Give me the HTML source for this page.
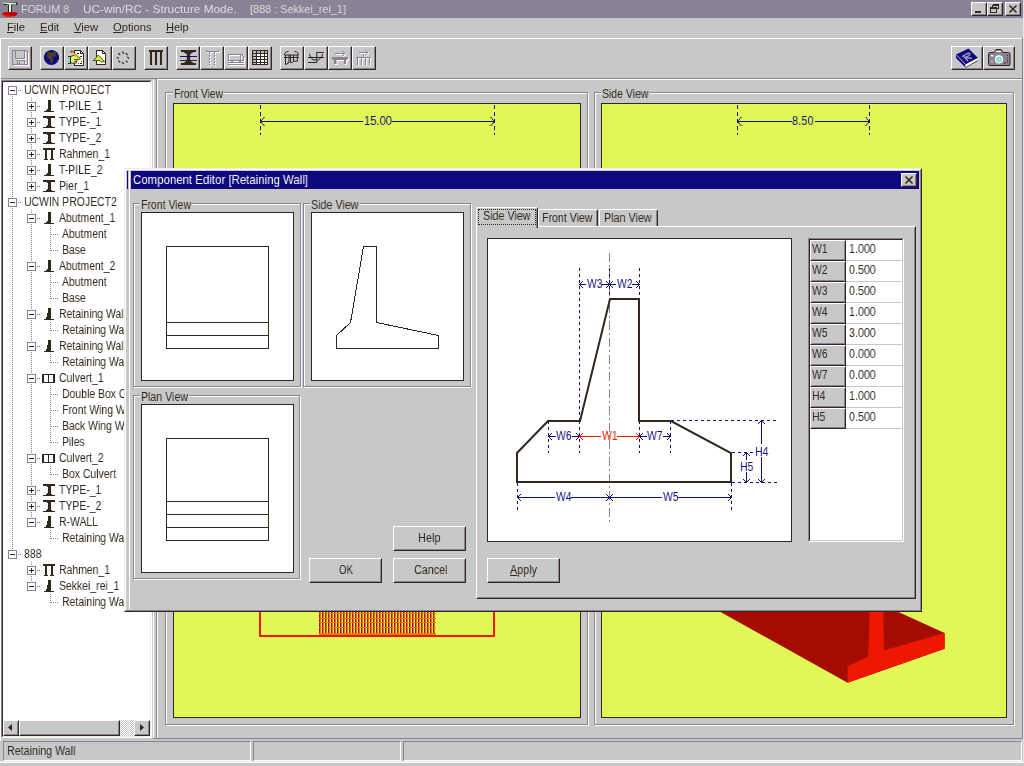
<!DOCTYPE html>
<html><head><meta charset="utf-8"><title>UC-win/RC</title>
<style>
html,body{margin:0;padding:0;}
body{width:1024px;height:766px;overflow:hidden;background:#c8c8c8;position:relative;font-family:"Liberation Sans",sans-serif;font-size:12px;color:#30281f;}
div,span{position:absolute;box-sizing:border-box;white-space:nowrap;}
svg{position:absolute;overflow:visible;}
span{will-change:transform;}
u{text-decoration:underline;text-underline-offset:1px;}
.t{line-height:16px;height:16px;}
.raised{background:#c8c8c8;border:1px solid;border-color:#ffffff #30281f #30281f #ffffff;}
.raised:after{content:"";position:absolute;left:0;top:0;right:0;bottom:0;border:1px solid;border-color:#c8c8c8 #8c8296 #8c8296 #c8c8c8;}
.tb{background:#c8c8c8;border:1px solid;border-color:#ffffff #30281f #30281f #ffffff;width:24px;height:24px;top:46px;}
.tb:after{content:"";position:absolute;left:0;top:0;right:0;bottom:0;border:1px solid;border-color:#c8c8c8 #8c8296 #8c8296 #c8c8c8;}
.grp{border:1px solid #8c8296;box-shadow:1px 1px 0 #ffffff, inset 1px 1px 0 #ffffff;}
.lbl{background:#c8c8c8;padding:0 1px;line-height:14px;height:14px;}
.sunk{border:1px solid;border-color:#8c8296 #ffffff #ffffff #8c8296;}
.btn{background:#c8c8c8;border:1px solid;border-color:#ffffff #30281f #30281f #ffffff;text-align:center;}
.btn:after{content:"";position:absolute;left:0;top:0;right:0;bottom:0;border:1px solid;border-color:#c8c8c8 #8c8296 #8c8296 #c8c8c8;}
.btn span{left:0;right:0;top:4px;line-height:14px;}
.box{background:#ffffff;border:1px solid #30281f;}
.ms{transform:scaleX(0.88);transform-origin:0 0;}
.btn span.ms{transform-origin:50% 0;}
.hl{height:1px;} .vl{width:1px;}
</style></head>
<body>
<div id="title" style="left:0;top:0;width:1023px;height:18px;background:#8c8296;"></div>
<span style="left:21px;top:1px;font-size:11px;line-height:16px;height:16px;transform:scaleX(0.970);transform-origin:0 0;color:#dcdcdc;">FORUM 8</span>
<span style="left:82.5px;top:1px;font-size:11px;line-height:16px;height:16px;transform:scaleX(1.073);transform-origin:0 0;color:#dcdcdc;">UC-win/RC - Structure Mode.</span>
<span style="left:250px;top:1px;font-size:11px;line-height:16px;height:16px;transform:scaleX(0.987);transform-origin:0 0;color:#dcdcdc;">[888 : Sekkei_rei_1]</span>
<svg style="left:0;top:0" width="20" height="18" viewBox="0 0 20 18"><path d="M3.5 2.5H17.5V5H12V12H8V5H3.5Z" fill="#30281f"/><path d="M3 2L5.5 2.5L16 3V4.5L11 4.5V12H9V4.5L5.5 4L3 3.2Z" fill="#c4f0c4"/><path d="M9.6 5V12H10.6V5Z" fill="#ffffff"/><path d="M2 13.5L5 12H15L18 13.5L15.5 16L8 17L4 16Z" fill="#b80000"/><path d="M2 13.8L9 15L11 16.6L8 17L4 16Z" fill="#f01808"/></svg>
<div class="raised" style="left:971px;top:2px;width:16px;height:14px;"></div>
<div class="raised" style="left:987px;top:2px;width:16px;height:14px;"></div>
<div class="raised" style="left:1005px;top:2px;width:16px;height:14px;"></div>
<div style="left:975px;top:11px;width:6px;height:2px;background:#30281f;"></div>
<svg style="left:987px;top:2px" width="16" height="14" viewBox="0 0 16 14" shape-rendering="crispEdges"><path d="M5.5 3.5h6M5.5 2.5h6v4h-2M5.5 2.5v2M3.5 6.5h6M3.5 5.5h6v5h-6z" fill="none" stroke="#30281f" stroke-width="1"/></svg>
<svg style="left:1005px;top:2px" width="16" height="14" viewBox="0 0 16 14"><path d="M4.5 3.5l7 7M11.5 3.5l-7 7" fill="none" stroke="#30281f" stroke-width="1.6"/></svg>
<span style="left:7.4px;top:19px;font-size:11px;line-height:16px;height:16px;transform:scaleX(1.016);transform-origin:0 0;"><u>F</u>ile</span>
<span style="left:40.2px;top:19px;font-size:11px;line-height:16px;height:16px;transform:scaleX(1.013);transform-origin:0 0;"><u>E</u>dit</span>
<span style="left:74.2px;top:19px;font-size:11px;line-height:16px;height:16px;transform:scaleX(1.024);transform-origin:0 0;"><u>V</u>iew</span>
<span style="left:112.5px;top:19px;font-size:11px;line-height:16px;height:16px;transform:scaleX(1.021);transform-origin:0 0;"><u>O</u>ptions</span>
<span style="left:166px;top:19px;font-size:11px;line-height:16px;height:16px;transform:scaleX(1.003);transform-origin:0 0;"><u>H</u>elp</span>
<div class="hl" style="left:0;top:38px;width:1023px;background:#ffffff;"></div>
<div class="vl" style="left:0;top:38px;height:40px;background:#ffffff;"></div>
<div class="vl" style="left:1022px;top:38px;height:41px;background:#8c8296;"></div>
<div class="hl" style="left:0;top:78px;width:1023px;background:#8c8296;"></div>
<div class="tb" id="tb0" style="left:8px;"></div>
<div class="tb" id="tb1" style="left:40px;"></div>
<div class="tb" id="tb2" style="left:64px;"></div>
<div class="tb" id="tb3" style="left:88px;"></div>
<div class="tb" id="tb4" style="left:112px;"></div>
<div class="tb" id="tb5" style="left:144px;"></div>
<div class="tb" id="tb6" style="left:176px;"></div>
<div class="tb" id="tb7" style="left:200px;"></div>
<div class="tb" id="tb8" style="left:224px;"></div>
<div class="tb" id="tb9" style="left:248px;"></div>
<div class="tb" id="tb10" style="left:280px;"></div>
<div class="tb" id="tb11" style="left:304px;"></div>
<div class="tb" id="tb12" style="left:328px;"></div>
<div class="tb" id="tb13" style="left:352px;"></div>
<div class="tb" id="tbA" style="left:951px;width:32px;"></div>
<div class="tb" id="tbB" style="left:983px;width:32px;"></div>
<svg style="left:0;top:0" width="1024" height="80" shape-rendering="crispEdges" fill="none"><g transform="translate(8,46)"><path transform="translate(1,1)" d="M19.5 5.5V18.5H4.5M7.5 12.5H16.5V4.5M16.5 14.5V18.5M12.5 17.5H11.5" stroke="#ffffff"/><path d="M4.5 4.5H18.5L19.5 5.5V18.5H4.5ZM7.5 4.5V12.5H16.5V4.5M9.5 18.5V14.5H16.5V18.5M11.5 15.5V17.5" stroke="#8c8296"/></g><g transform="translate(40,46)"><g shape-rendering="auto"><circle cx="11.5" cy="11.5" r="7.6" fill="#10087f"/><path d="M7.5 6.5L10 5.5L10.5 7L13 6.5L14 5.5L16.5 6.5L15.5 8L16 10L14 11L13 10.5L12.5 12.5L13.5 14L12 17L10.5 17L10.5 13.5L8 12.5L6 10L7 8.5ZM16.5 14.5L18 14L17.5 16.5L16.5 16Z" fill="#4a3e28"/></g></g><g transform="translate(64,46)"><path d="M10.5 4.5H16.5L19.5 7.5V19.5H10.5Z" fill="#ffffff" stroke="#30281f"/><path d="M16.5 4.5V7.5H19.5" stroke="#30281f"/><path d="M13 7.5h2M16 10.5h2M14 17.5h1M16 17.5h2M17 15.5h1" stroke="#30281f"/><g shape-rendering="auto"><path d="M6.5 11L8 9.8L11 9.5L12.5 11L16 12.2L16.2 13.4L12.8 13.6L13 15L12.5 17L9 17.3L6.5 16.5Z" fill="#eef27a" stroke="#30281f" stroke-width="0.9"/><path d="M10 13.6H13M10 15.4H12.6" stroke="#30281f" stroke-width="0.8"/><path d="M8.2 6.2L15.6 13.4" stroke="#d8e000" stroke-width="1.7"/><path d="M8.6 5.2L16.2 12.6" stroke="#30281f" stroke-width="0.7"/><circle cx="7.6" cy="5.6" r="1.1" fill="#f01000"/></g><rect x="4" y="11" width="2" height="6" fill="#80dcc8"/><path d="M4 10.5H7M4 17.5H7M6.5 11V17" stroke="#30281f"/></g><g transform="translate(88,46)"><path d="M8.5 4.5H14.5L17.5 7.5V18.5H8.5Z" fill="#ffffff" stroke="#30281f"/><path d="M14.5 4.5V7.5H17.5" stroke="#30281f"/><g shape-rendering="auto"><path d="M10.4 9L5.3 14.6H12L13 15.8H16.6Z" fill="#d8f018" stroke="#30281f" stroke-width="0.8"/></g></g><g transform="translate(112,46)"><path d="M15.3 10.9L17.1 12.7M13.8 14.6L15.6 16.4M10.1 16.1L11.9 17.9M6.4 14.6L8.2 16.4M4.9 10.9L6.7 12.7M6.4 7.2L8.2 9.0M10.1 5.7L11.9 7.5M13.8 7.2L15.6 9.0" stroke="#30281f" stroke-width="1.2" shape-rendering="auto"/></g><g transform="translate(144,46)"><path d="M5 4H19V6H5ZM6 6H8V19H6ZM11 6H13V19H11ZM16 6H18V19H16Z" fill="#30281f"/></g><g transform="translate(176,46)"><path d="M5 4H20V6H17.5L14.2 8.2V14.8L17.5 17H20V19H5V17H7.5L10.8 14.8V8.2L7.5 6H5Z" fill="#30281f" shape-rendering="auto"/><path d="M4 10.5H21" stroke="#10087f"/><path d="M4 14.5H21" stroke="#30281f"/></g><g transform="translate(200,46)"><path transform="translate(1,1)" d="M6.5 4V5.5H18.5V4" stroke="#ffffff"/><path transform="translate(1,1)" d="M9.5 6V19M14.5 6V19" stroke="#ffffff" stroke-dasharray="2 1"/><path transform="translate(0,0)" d="M6.5 4V5.5H18.5V4" stroke="#8c8296"/><path transform="translate(0,0)" d="M9.5 6V19M14.5 6V19" stroke="#8c8296" stroke-dasharray="2 1"/></g><g transform="translate(224,46)"><path transform="translate(1,1)" d="M4.5 8.5H16.5V14.5H4.5ZM16.5 8.5H18.5L19.5 11.5V14.5H16.5M4 16.5H20M7 15.5H9M15 15.5H17M4 18.5H20" stroke="#ffffff"/><path transform="translate(0,0)" d="M4.5 8.5H16.5V14.5H4.5ZM16.5 8.5H18.5L19.5 11.5V14.5H16.5M4 16.5H20M7 15.5H9M15 15.5H17M4 18.5H20" stroke="#8c8296"/></g><g transform="translate(248,46)"><rect x="4" y="4" width="16" height="15" fill="#30281f"/><rect x="5" y="5" width="3" height="2" fill="#b8b8b8"/><rect x="9" y="5" width="3" height="2" fill="#b8b8b8"/><rect x="13" y="5" width="3" height="2" fill="#b8b8b8"/><rect x="17" y="5" width="2" height="2" fill="#b8b8b8"/><rect x="5" y="8" width="3" height="2" fill="#b8b8b8"/><rect x="9" y="8" width="3" height="2" fill="#ffffff"/><rect x="13" y="8" width="3" height="2" fill="#ffffff"/><rect x="17" y="8" width="2" height="2" fill="#ffffff"/><rect x="5" y="11" width="3" height="2" fill="#b8b8b8"/><rect x="9" y="11" width="3" height="2" fill="#ffffff"/><rect x="13" y="11" width="3" height="2" fill="#ffffff"/><rect x="17" y="11" width="2" height="2" fill="#ffffff"/><rect x="5" y="14" width="3" height="2" fill="#b8b8b8"/><rect x="9" y="14" width="3" height="2" fill="#ffffff"/><rect x="13" y="14" width="3" height="2" fill="#ffffff"/><rect x="17" y="14" width="2" height="2" fill="#ffffff"/><rect x="5" y="17" width="3" height="1" fill="#b8b8b8"/><rect x="9" y="17" width="3" height="1" fill="#ffffff"/><rect x="13" y="17" width="3" height="1" fill="#ffffff"/><rect x="17" y="17" width="2" height="1" fill="#ffffff"/></g><g transform="translate(280,46)"><path d="M4.5 9C4.5 6.8 5.8 5.5 8.6 5.5M14.4 5.5C17.2 5.5 18.5 6.8 18.5 9M4.5 9H18.5M4 11.5H19M5.5 9V18.5L7.5 17.8V17H9V9M10.5 9V16.5H12.5L13.5 15.2M13.5 9V15.2H17.4V9" stroke="#30281f" shape-rendering="auto"/></g><g transform="translate(304,46)"><path d="M12.5 6.5H20M12.8 6.5V16.5H4M4 11.5H20M5.5 8L6.2 10L9 14H14.5L17.6 11L18.7 8" stroke="#30281f" shape-rendering="auto"/></g><g transform="translate(328,46)"><g transform="translate(1,1)"><path d="M4 11H20V13L18 14.5V18H16V14H8.5V18H6V14.5L4 13Z" fill="#ffffff" shape-rendering="auto"/><path d="M7 7.5H17M14 5L16.8 7.5L14 10" stroke="#ffffff" shape-rendering="auto"/></g><g transform="translate(0,0)"><path d="M4 11H20V13L18 14.5V18H16V14H8.5V18H6V14.5L4 13Z" fill="#8c8296" shape-rendering="auto"/><path d="M7 7.5H17M14 5L16.8 7.5L14 10" stroke="#8c8296" shape-rendering="auto"/></g></g><g transform="translate(352,46)"><g transform="translate(1,1)"><path d="M4 11.5H19M5.5 12V19M9.5 12V19M13.5 12V19M17.5 12V19M11.5 8V11" stroke="#ffffff"/><path d="M7 6.5H16M13.3 4L15.9 6.5L13.3 9" stroke="#ffffff" shape-rendering="auto"/></g><g transform="translate(0,0)"><path d="M4 11.5H19M5.5 12V19M9.5 12V19M13.5 12V19M17.5 12V19M11.5 8V11" stroke="#8c8296"/><path d="M7 6.5H16M13.3 4L15.9 6.5L13.3 9" stroke="#8c8296" shape-rendering="auto"/></g></g><g transform="translate(951,46)"><g shape-rendering="auto"><path d="M5 8.5L17.5 2.5L27 12L14.5 18.5Z" fill="#10087f"/><path d="M5 8.5V12L14.5 21.5V18.5Z" fill="#10087f"/><path d="M5.8 9.2L14.5 18.5" stroke="#d0d0e8" stroke-width="0.8"/><path d="M14.5 18.5L27 12V14.5L14.5 21.5Z" fill="#ffffff"/><path d="M14.5 21.5L27 14.5" stroke="#30281f" stroke-width="0.8"/><path d="M11 10.5L16.5 7.5C19 6.5 20 8.5 17.5 10L14.5 11.5M12 9.5L17 15M15 11.5L21 12.5" stroke="#a09cb4" stroke-width="1.4"/></g></g><g transform="translate(983,46)"><g shape-rendering="auto"><path d="M5.5 8C5.5 7 6 6.5 7 6.5H11L13 3.5H18L20 6.5H25.5C26.5 6.5 27 7 27 8V18.5C27 19.3 26.5 19.5 26 19.5H6.5C6 19.5 5.5 19.3 5.5 18.5Z" fill="#8c8296" stroke="#30281f"/><path d="M13 5.5H18" stroke="#ffffff"/><rect x="8" y="9" width="2.5" height="1.5" fill="#ffffff"/><circle cx="16" cy="13.4" r="4.1" fill="#ffffff"/><circle cx="16" cy="13.4" r="2.9" fill="#80dcc8"/><circle cx="16.5" cy="13.5" r="0.8" fill="#ffffff"/><path d="M24.5 9V18" stroke="#30281f" stroke-dasharray="1 1.2"/><path d="M21 18l2-2" stroke="#30281f"/><path d="M8 14l1 3l1-3" stroke="#b8b0c0" stroke-width="0.7"/></g></g></svg>
<div id="tree" style="left:1px;top:80px;width:151px;height:658px;border:1px solid;border-color:#8c8296 #ffffff #ffffff #8c8296;"></div>
<div id="treein" style="left:2px;top:81px;width:149px;height:656px;border:1px solid;border-color:#30281f #ecece6 #ecece6 #30281f;background:#ffffff;overflow:hidden;"><svg style="left:-3px;top:-82px" width="160" height="760" shape-rendering="crispEdges"><path d="M12.5 96V550" stroke="#8c8296" stroke-width="1" stroke-dasharray="1 1"/><path d="M31.5 98V182" stroke="#8c8296" stroke-width="1" stroke-dasharray="1 1"/><path d="M31.5 210V518" stroke="#8c8296" stroke-width="1" stroke-dasharray="1 1"/><path d="M31.5 562V582" stroke="#8c8296" stroke-width="1" stroke-dasharray="1 1"/><path d="M50.5 226V251" stroke="#8c8296" stroke-width="1" stroke-dasharray="1 1"/><path d="M50.5 274V299" stroke="#8c8296" stroke-width="1" stroke-dasharray="1 1"/><path d="M50.5 322V331" stroke="#8c8296" stroke-width="1" stroke-dasharray="1 1"/><path d="M50.5 354V363" stroke="#8c8296" stroke-width="1" stroke-dasharray="1 1"/><path d="M50.5 386V443" stroke="#8c8296" stroke-width="1" stroke-dasharray="1 1"/><path d="M50.5 466V475" stroke="#8c8296" stroke-width="1" stroke-dasharray="1 1"/><path d="M50.5 530V539" stroke="#8c8296" stroke-width="1" stroke-dasharray="1 1"/><path d="M50.5 594V603" stroke="#8c8296" stroke-width="1" stroke-dasharray="1 1"/><path d="M18 90.5H22" stroke="#8c8296" stroke-width="1" stroke-dasharray="1 1"/><rect x="8.5" y="86.5" width="8" height="8" fill="#fff" stroke="#8c8296"/><path d="M10 90.5h5" stroke="#30281f"/><path d="M37 106.5H41" stroke="#8c8296" stroke-width="1" stroke-dasharray="1 1"/><rect x="27.5" y="102.5" width="8" height="8" fill="#fff" stroke="#8c8296"/><path d="M29 106.5h5" stroke="#30281f"/><path d="M31.5 104v5" stroke="#30281f"/><path d="M44 112h10v-1.5h-2.5l-1-1.5v-9h-3v9l-1 1.5h-2.5z" fill="#30281f"/><path d="M37 122.5H41" stroke="#8c8296" stroke-width="1" stroke-dasharray="1 1"/><rect x="27.5" y="118.5" width="8" height="8" fill="#fff" stroke="#8c8296"/><path d="M29 122.5h5" stroke="#30281f"/><path d="M31.5 120v5" stroke="#30281f"/><path d="M43 116h12v1.5h-3l-1.5 2v5l1.5 2h3v1.5h-12v-1.5h3l1.5-2v-5l-1.5-2h-3z" fill="#30281f"/><path d="M37 138.5H41" stroke="#8c8296" stroke-width="1" stroke-dasharray="1 1"/><rect x="27.5" y="134.5" width="8" height="8" fill="#fff" stroke="#8c8296"/><path d="M29 138.5h5" stroke="#30281f"/><path d="M31.5 136v5" stroke="#30281f"/><path d="M43 132h12v1.5h-3l-1.5 2v5l1.5 2h3v1.5h-12v-1.5h3l1.5-2v-5l-1.5-2h-3z" fill="#30281f"/><path d="M37 154.5H41" stroke="#8c8296" stroke-width="1" stroke-dasharray="1 1"/><rect x="27.5" y="150.5" width="8" height="8" fill="#fff" stroke="#8c8296"/><path d="M29 154.5h5" stroke="#30281f"/><path d="M31.5 152v5" stroke="#30281f"/><path d="M43 148h12v2h-2v9h1v1h-4v-1h1v-9h-4v9h1v1h-4v-1h1v-9h-2z" fill="#30281f"/><path d="M37 170.5H41" stroke="#8c8296" stroke-width="1" stroke-dasharray="1 1"/><rect x="27.5" y="166.5" width="8" height="8" fill="#fff" stroke="#8c8296"/><path d="M29 170.5h5" stroke="#30281f"/><path d="M31.5 168v5" stroke="#30281f"/><path d="M44 176h10v-1.5h-2.5l-1-1.5v-9h-3v9l-1 1.5h-2.5z" fill="#30281f"/><path d="M37 186.5H41" stroke="#8c8296" stroke-width="1" stroke-dasharray="1 1"/><rect x="27.5" y="182.5" width="8" height="8" fill="#fff" stroke="#8c8296"/><path d="M29 186.5h5" stroke="#30281f"/><path d="M31.5 184v5" stroke="#30281f"/><path d="M43 180h12v1.5h-3l-1.5 2v5l1.5 2h3v1.5h-12v-1.5h3l1.5-2v-5l-1.5-2h-3z" fill="#30281f"/><path d="M18 202.5H22" stroke="#8c8296" stroke-width="1" stroke-dasharray="1 1"/><rect x="8.5" y="198.5" width="8" height="8" fill="#fff" stroke="#8c8296"/><path d="M10 202.5h5" stroke="#30281f"/><path d="M37 218.5H41" stroke="#8c8296" stroke-width="1" stroke-dasharray="1 1"/><rect x="27.5" y="214.5" width="8" height="8" fill="#fff" stroke="#8c8296"/><path d="M29 218.5h5" stroke="#30281f"/><path d="M44 224h10v-1.5h-2.5l-1-1.5v-9h-3v9l-1 1.5h-2.5z" fill="#30281f"/><path d="M51 234.5H59" stroke="#8c8296" stroke-width="1" stroke-dasharray="1 1"/><path d="M51 250.5H59" stroke="#8c8296" stroke-width="1" stroke-dasharray="1 1"/><path d="M37 266.5H41" stroke="#8c8296" stroke-width="1" stroke-dasharray="1 1"/><rect x="27.5" y="262.5" width="8" height="8" fill="#fff" stroke="#8c8296"/><path d="M29 266.5h5" stroke="#30281f"/><path d="M44 272h10v-1.5h-2.5l-1-1.5v-9h-3v9l-1 1.5h-2.5z" fill="#30281f"/><path d="M51 282.5H59" stroke="#8c8296" stroke-width="1" stroke-dasharray="1 1"/><path d="M51 298.5H59" stroke="#8c8296" stroke-width="1" stroke-dasharray="1 1"/><path d="M37 314.5H41" stroke="#8c8296" stroke-width="1" stroke-dasharray="1 1"/><rect x="27.5" y="310.5" width="8" height="8" fill="#fff" stroke="#8c8296"/><path d="M29 314.5h5" stroke="#30281f"/><path d="M44 320h10v-1.5h-3.5v-10.5h-2l-1.5 8l-1 2.5h-2z" fill="#30281f"/><path d="M51 330.5H59" stroke="#8c8296" stroke-width="1" stroke-dasharray="1 1"/><path d="M37 346.5H41" stroke="#8c8296" stroke-width="1" stroke-dasharray="1 1"/><rect x="27.5" y="342.5" width="8" height="8" fill="#fff" stroke="#8c8296"/><path d="M29 346.5h5" stroke="#30281f"/><path d="M44 352h10v-1.5h-3.5v-10.5h-2l-1.5 8l-1 2.5h-2z" fill="#30281f"/><path d="M51 362.5H59" stroke="#8c8296" stroke-width="1" stroke-dasharray="1 1"/><path d="M37 378.5H41" stroke="#8c8296" stroke-width="1" stroke-dasharray="1 1"/><rect x="27.5" y="374.5" width="8" height="8" fill="#fff" stroke="#8c8296"/><path d="M29 378.5h5" stroke="#30281f"/><rect x="43" y="374.5" width="11" height="8" fill="#fff" stroke="#30281f" stroke-width="1.6"/><path d="M48.5 374.5v8" stroke="#30281f" stroke-width="1.6"/><path d="M51 394.5H59" stroke="#8c8296" stroke-width="1" stroke-dasharray="1 1"/><path d="M51 410.5H59" stroke="#8c8296" stroke-width="1" stroke-dasharray="1 1"/><path d="M51 426.5H59" stroke="#8c8296" stroke-width="1" stroke-dasharray="1 1"/><path d="M51 442.5H59" stroke="#8c8296" stroke-width="1" stroke-dasharray="1 1"/><path d="M37 458.5H41" stroke="#8c8296" stroke-width="1" stroke-dasharray="1 1"/><rect x="27.5" y="454.5" width="8" height="8" fill="#fff" stroke="#8c8296"/><path d="M29 458.5h5" stroke="#30281f"/><rect x="43" y="454.5" width="11" height="8" fill="#fff" stroke="#30281f" stroke-width="1.6"/><path d="M48.5 454.5v8" stroke="#30281f" stroke-width="1.6"/><path d="M51 474.5H59" stroke="#8c8296" stroke-width="1" stroke-dasharray="1 1"/><path d="M37 490.5H41" stroke="#8c8296" stroke-width="1" stroke-dasharray="1 1"/><rect x="27.5" y="486.5" width="8" height="8" fill="#fff" stroke="#8c8296"/><path d="M29 490.5h5" stroke="#30281f"/><path d="M31.5 488v5" stroke="#30281f"/><path d="M43 484h12v1.5h-3l-1.5 2v5l1.5 2h3v1.5h-12v-1.5h3l1.5-2v-5l-1.5-2h-3z" fill="#30281f"/><path d="M37 506.5H41" stroke="#8c8296" stroke-width="1" stroke-dasharray="1 1"/><rect x="27.5" y="502.5" width="8" height="8" fill="#fff" stroke="#8c8296"/><path d="M29 506.5h5" stroke="#30281f"/><path d="M31.5 504v5" stroke="#30281f"/><path d="M43 500h12v1.5h-3l-1.5 2v5l1.5 2h3v1.5h-12v-1.5h3l1.5-2v-5l-1.5-2h-3z" fill="#30281f"/><path d="M37 522.5H41" stroke="#8c8296" stroke-width="1" stroke-dasharray="1 1"/><rect x="27.5" y="518.5" width="8" height="8" fill="#fff" stroke="#8c8296"/><path d="M29 522.5h5" stroke="#30281f"/><path d="M44 528h10v-1.5h-3.5v-10.5h-2l-1.5 8l-1 2.5h-2z" fill="#30281f"/><path d="M51 538.5H59" stroke="#8c8296" stroke-width="1" stroke-dasharray="1 1"/><path d="M18 554.5H22" stroke="#8c8296" stroke-width="1" stroke-dasharray="1 1"/><rect x="8.5" y="550.5" width="8" height="8" fill="#fff" stroke="#8c8296"/><path d="M10 554.5h5" stroke="#30281f"/><path d="M37 570.5H41" stroke="#8c8296" stroke-width="1" stroke-dasharray="1 1"/><rect x="27.5" y="566.5" width="8" height="8" fill="#fff" stroke="#8c8296"/><path d="M29 570.5h5" stroke="#30281f"/><path d="M31.5 568v5" stroke="#30281f"/><path d="M43 564h12v2h-2v9h1v1h-4v-1h1v-9h-4v9h1v1h-4v-1h1v-9h-2z" fill="#30281f"/><path d="M37 586.5H41" stroke="#8c8296" stroke-width="1" stroke-dasharray="1 1"/><rect x="27.5" y="582.5" width="8" height="8" fill="#fff" stroke="#8c8296"/><path d="M29 586.5h5" stroke="#30281f"/><path d="M44 592h10v-1.5h-3.5v-10.5h-2l-1.5 8l-1 2.5h-2z" fill="#30281f"/><path d="M51 602.5H59" stroke="#8c8296" stroke-width="1" stroke-dasharray="1 1"/></svg><span style="left:21px;top:0px;font-size:12.5px;line-height:16px;height:16px;transform:scaleX(0.835);transform-origin:0 0;">UCWIN PROJECT</span><span style="left:56px;top:16px;font-size:12.5px;line-height:16px;height:16px;transform:scaleX(0.835);transform-origin:0 0;">T-PILE_1</span><span style="left:56px;top:32px;font-size:12.5px;line-height:16px;height:16px;transform:scaleX(0.835);transform-origin:0 0;">TYPE-_1</span><span style="left:56px;top:48px;font-size:12.5px;line-height:16px;height:16px;transform:scaleX(0.835);transform-origin:0 0;">TYPE-_2</span><span style="left:56px;top:64px;font-size:12.5px;line-height:16px;height:16px;transform:scaleX(0.835);transform-origin:0 0;">Rahmen_1</span><span style="left:56px;top:80px;font-size:12.5px;line-height:16px;height:16px;transform:scaleX(0.835);transform-origin:0 0;">T-PILE_2</span><span style="left:56px;top:96px;font-size:12.5px;line-height:16px;height:16px;transform:scaleX(0.835);transform-origin:0 0;">Pier_1</span><span style="left:21px;top:112px;font-size:12.5px;line-height:16px;height:16px;transform:scaleX(0.835);transform-origin:0 0;">UCWIN PROJECT2</span><span style="left:56px;top:128px;font-size:12.5px;line-height:16px;height:16px;transform:scaleX(0.835);transform-origin:0 0;">Abutment_1</span><span style="left:59px;top:144px;font-size:12.5px;line-height:16px;height:16px;transform:scaleX(0.835);transform-origin:0 0;">Abutment</span><span style="left:59px;top:160px;font-size:12.5px;line-height:16px;height:16px;transform:scaleX(0.835);transform-origin:0 0;">Base</span><span style="left:56px;top:176px;font-size:12.5px;line-height:16px;height:16px;transform:scaleX(0.835);transform-origin:0 0;">Abutment_2</span><span style="left:59px;top:192px;font-size:12.5px;line-height:16px;height:16px;transform:scaleX(0.835);transform-origin:0 0;">Abutment</span><span style="left:59px;top:208px;font-size:12.5px;line-height:16px;height:16px;transform:scaleX(0.835);transform-origin:0 0;">Base</span><span style="left:56px;top:224px;font-size:12.5px;line-height:16px;height:16px;transform:scaleX(0.835);transform-origin:0 0;">Retaining Wall_1</span><span style="left:59px;top:240px;font-size:12.5px;line-height:16px;height:16px;transform:scaleX(0.835);transform-origin:0 0;">Retaining Wall</span><span style="left:56px;top:256px;font-size:12.5px;line-height:16px;height:16px;transform:scaleX(0.835);transform-origin:0 0;">Retaining Wall_2</span><span style="left:59px;top:272px;font-size:12.5px;line-height:16px;height:16px;transform:scaleX(0.835);transform-origin:0 0;">Retaining Wall</span><span style="left:56px;top:288px;font-size:12.5px;line-height:16px;height:16px;transform:scaleX(0.835);transform-origin:0 0;">Culvert_1</span><span style="left:59px;top:304px;font-size:12.5px;line-height:16px;height:16px;transform:scaleX(0.835);transform-origin:0 0;">Double Box Culvert</span><span style="left:59px;top:320px;font-size:12.5px;line-height:16px;height:16px;transform:scaleX(0.835);transform-origin:0 0;">Front Wing Wall</span><span style="left:59px;top:336px;font-size:12.5px;line-height:16px;height:16px;transform:scaleX(0.835);transform-origin:0 0;">Back Wing Wall</span><span style="left:59px;top:352px;font-size:12.5px;line-height:16px;height:16px;transform:scaleX(0.835);transform-origin:0 0;">Piles</span><span style="left:56px;top:368px;font-size:12.5px;line-height:16px;height:16px;transform:scaleX(0.835);transform-origin:0 0;">Culvert_2</span><span style="left:59px;top:384px;font-size:12.5px;line-height:16px;height:16px;transform:scaleX(0.835);transform-origin:0 0;">Box Culvert</span><span style="left:56px;top:400px;font-size:12.5px;line-height:16px;height:16px;transform:scaleX(0.835);transform-origin:0 0;">TYPE-_1</span><span style="left:56px;top:416px;font-size:12.5px;line-height:16px;height:16px;transform:scaleX(0.835);transform-origin:0 0;">TYPE-_2</span><span style="left:56px;top:432px;font-size:12.5px;line-height:16px;height:16px;transform:scaleX(0.835);transform-origin:0 0;">R-WALL</span><span style="left:59px;top:448px;font-size:12.5px;line-height:16px;height:16px;transform:scaleX(0.835);transform-origin:0 0;">Retaining Wall</span><span style="left:21px;top:464px;font-size:12.5px;line-height:16px;height:16px;transform:scaleX(0.835);transform-origin:0 0;">888</span><span style="left:56px;top:480px;font-size:12.5px;line-height:16px;height:16px;transform:scaleX(0.835);transform-origin:0 0;">Rahmen_1</span><span style="left:56px;top:496px;font-size:12.5px;line-height:16px;height:16px;transform:scaleX(0.835);transform-origin:0 0;">Sekkei_rei_1</span><span style="left:59px;top:512px;font-size:12.5px;line-height:16px;height:16px;transform:scaleX(0.835);transform-origin:0 0;">Retaining Wall</span><div class="" style="left:0px;top:638px;width:147px;height:16px;background:repeating-conic-gradient(#ffffff 0% 25%, #c8c8c8 0% 50%) 0 0/2px 2px;"></div><div class="raised" style="left:0px;top:638px;width:16px;height:16px;"></div><div class="raised" style="left:16px;top:638px;width:101px;height:16px;"></div><div class="raised" style="left:131px;top:638px;width:16px;height:16px;"></div><svg style="left:0px;top:638px" width="16" height="16"><path d="M9 4v7l-4-3.5z" fill="#30281f"/></svg><svg style="left:131px;top:638px" width="16" height="16"><path d="M6 4v7l4-3.5z" fill="#30281f"/></svg></div>
<div class="vl" style="left:0;top:38px;height:703px;background:#ffffff;"></div>
<div class="vl" style="left:153px;top:80px;height:659px;background:#ffffff;"></div>
<div class="vl" style="left:156px;top:79px;height:660px;background:#8c8296;"></div>
<div class="vl" style="left:157px;top:79px;height:659px;background:#ffffff;"></div>
<div class="hl" style="left:157px;top:79px;width:865px;background:#ffffff;"></div>
<div class="hl" style="left:153px;top:738px;width:870px;background:#8c8296;"></div>
<div class="vl" style="left:1022px;top:79px;height:660px;background:#8c8296;"></div>
<div class="vl" style="left:1023px;top:0px;height:763px;background:#e4e4e4;"></div>
<div class="grp" style="left:165px;top:92px;width:423px;height:633px;"></div>
<div style="left:172.5px;top:92px;width:51px;height:2px;background:#c8c8c8;"></div>
<span style="left:173.5px;top:85.5px;font-size:12.5px;line-height:16px;height:16px;transform:scaleX(0.823);transform-origin:0 0;">Front View</span>
<div class="grp" style="left:594px;top:92px;width:420px;height:633px;"></div>
<div style="left:601px;top:92px;width:48.5px;height:2px;background:#c8c8c8;"></div>
<span style="left:602px;top:85.5px;font-size:12.5px;line-height:16px;height:16px;transform:scaleX(0.840);transform-origin:0 0;">Side View</span>
<div id="y1" style="left:173px;top:103px;width:408px;height:615px;background:#e1f755;border:1px solid #30281f;overflow:hidden;"></div>
<div id="y2" style="left:601px;top:103px;width:406px;height:615px;background:#e1f755;border:1px solid #30281f;overflow:hidden;"></div>
<svg style="left:0;top:0" width="1024" height="766" shape-rendering="crispEdges"><path d="M260.5 105V135M494.5 105V135" stroke="#10107c" stroke-dasharray="4 3" fill="none"/><path d="M260 121.5H362.5M391.5 121.5H495" stroke="#10107c" fill="none"/><path d="M264.5 117L260.5 121.5L264.5 126M490.5 117L494.5 121.5L490.5 126" stroke="#10107c" fill="none" shape-rendering="auto"/><path d="M737.5 105V135M869.5 105V135" stroke="#10107c" stroke-dasharray="4 3" fill="none"/><path d="M737 121.5H791.5M814.5 121.5H870" stroke="#10107c" fill="none"/><path d="M741.5 117L737.5 121.5L741.5 126M865.5 117L869.5 121.5L865.5 126" stroke="#10107c" fill="none" shape-rendering="auto"/><path d="M260 600V636H494V600" stroke="#ee1800" stroke-width="2" fill="none"/><defs><pattern id="hv" x="319" y="600" width="3" height="40" patternUnits="userSpaceOnUse"><rect width="1" height="40" fill="#a01000"/><rect x="1" width="1" height="40" fill="#f07000"/></pattern></defs><rect x="319" y="600" width="117" height="35" fill="url(#hv)"/><path d="M319 613.5H436M319 618.5H436M319 622.5H436M319 627.5H436" stroke="#f07800" stroke-width="1" fill="none"/><rect x="319" y="633" width="117" height="2" fill="#f07800"/><g shape-rendering="auto"><path d="M699 600L847.6 682.8L944.6 648.8V632.9L872 600Z" fill="#a50c00"/><path d="M847.6 682.8V666.4L868.2 656.4L870 600H883L884 650.5L944.6 632.9V648.8Z" fill="#ee1800"/></g></svg><span style="left:363.5px;top:113px;font-size:12.5px;line-height:16px;height:16px;transform:scaleX(0.895);transform-origin:0 0;color:#10107c;">15.00</span><span style="left:792px;top:113px;font-size:12.5px;line-height:16px;height:16px;transform:scaleX(0.884);transform-origin:0 0;color:#10107c;">8.50</span>
<div class="sunk" style="left:3px;top:741px;width:248px;height:20px;"></div>
<div class="sunk" style="left:253px;top:741px;width:148px;height:20px;"></div>
<div class="sunk" style="left:403px;top:741px;width:619px;height:20px;"></div>
<span style="left:7px;top:743px;font-size:12.5px;line-height:16px;height:16px;transform:scaleX(0.855);transform-origin:0 0;">Retaining Wall</span>
<div class="hl" style="left:0;top:761px;width:1024px;background:#ecece6;"></div>
<div class="hl" style="left:0;top:762px;width:1024px;background:#ffffff;"></div>
<div id="dlg" style="left:124px;top:168px;width:798px;height:444px;background:#c8c8c8;border:1px solid;border-color:#ecece6 #30281f #30281f #ecece6;"></div><div style="left:125px;top:169px;width:796px;height:442px;border:1px solid;border-color:#ffffff #8c8296 #8c8296 #ffffff;"></div><div style="left:127px;top:171px;width:1px;height:18px;background:#10087f;"></div><div style="left:129px;top:170px;width:1px;height:439px;background:#ffffff;"></div><div id="cap" style="left:131px;top:171px;width:788px;height:18px;background:#10087f;"></div><span style="left:133px;top:172px;font-size:13px;line-height:16px;height:16px;transform:scaleX(0.880);transform-origin:0 0;color:#fff;">Component Editor [Retaining Wall]</span><div class="raised" style="left:901px;top:173px;width:16px;height:14px;"></div><svg style="left:901px;top:173px" width="16" height="14" viewBox="0 0 16 14"><path d="M4.5 3.5l7 7M11.5 3.5l-7 7" fill="none" stroke="#30281f" stroke-width="1.6"/></svg><div class="grp" style="left:133px;top:203px;width:168px;height:184px;"></div><div style="left:140px;top:203px;width:52px;height:2px;background:#c8c8c8;"></div><span style="left:141px;top:196.5px;font-size:12.5px;line-height:16px;height:16px;transform:scaleX(0.840);transform-origin:0 0;">Front View</span><div class="box" style="left:141px;top:212px;width:153px;height:169px;"></div><div class="grp" style="left:303px;top:203px;width:168px;height:184px;"></div><div style="left:310px;top:203px;width:49.5px;height:2px;background:#c8c8c8;"></div><span style="left:311px;top:196.5px;font-size:12.5px;line-height:16px;height:16px;transform:scaleX(0.858);transform-origin:0 0;">Side View</span><div class="box" style="left:311px;top:212px;width:153px;height:169px;"></div><div class="grp" style="left:133px;top:395px;width:167px;height:184px;"></div><div style="left:140px;top:395px;width:49px;height:2px;background:#c8c8c8;"></div><span style="left:141px;top:388.5px;font-size:12.5px;line-height:16px;height:16px;transform:scaleX(0.849);transform-origin:0 0;">Plan View</span><div class="box" style="left:141px;top:404px;width:153px;height:169px;"></div><svg style="left:0;top:0" width="1024" height="766" shape-rendering="crispEdges" fill="none" stroke="#30281f"><path d="M166.5 246.5H268.5V348.5H166.5ZM166.5 322.5H268.5M166.5 335.5H268.5"/><path d="M166.5 438.5H268.5V540.5H166.5ZM166.5 501.5H268.5M166.5 514.5H268.5M166.5 527.5H268.5"/><path d="M363.5 246.5H376.5V322.5L438.5 335.5V348.5H336.5V335.5L350.5 322.5Z"/></svg><div class="btn" style="left:393px;top:526px;width:73px;height:25px;"></div><span style="left:418.2px;top:530px;font-size:12.5px;line-height:16px;height:16px;transform:scaleX(0.875);transform-origin:0 0;">Help</span><div class="btn" style="left:309px;top:558px;width:73px;height:25px;"></div><span style="left:338.7px;top:562px;font-size:12.5px;line-height:16px;height:16px;transform:scaleX(0.775);transform-origin:0 0;">OK</span><div class="btn" style="left:393px;top:558px;width:73px;height:25px;"></div><span style="left:413.6px;top:562px;font-size:12.5px;line-height:16px;height:16px;transform:scaleX(0.858);transform-origin:0 0;">Cancel</span><div style="left:476px;top:226px;width:440px;height:373px;border:1px solid;border-color:#ffffff #30281f #30281f #ffffff;"></div><div style="left:477px;top:227px;width:438px;height:371px;border:1px solid;border-color:#c8c8c8 #8c8296 #8c8296 #c8c8c8;"></div><div style="left:538px;top:209px;width:60px;height:17px;background:#c8c8c8;border-left:1px solid #ffffff;border-top:1px solid #ffffff;border-right:1px solid #30281f;border-radius:2px 2px 0 0;"></div><div style="left:596px;top:211px;width:1px;height:15px;background:#8c8296;"></div><span style="left:542px;top:210px;font-size:12.5px;line-height:16px;height:16px;transform:scaleX(0.847);transform-origin:0 0;">Front View</span><div style="left:599px;top:209px;width:59px;height:17px;background:#c8c8c8;border-left:1px solid #ffffff;border-top:1px solid #ffffff;border-right:1px solid #30281f;border-radius:2px 2px 0 0;"></div><div style="left:656px;top:211px;width:1px;height:15px;background:#8c8296;"></div><span style="left:604px;top:210px;font-size:12.5px;line-height:16px;height:16px;transform:scaleX(0.860);transform-origin:0 0;">Plan View</span><div style="left:476px;top:207px;width:62px;height:21px;background:#c8c8c8;border-left:1px solid #ffffff;border-top:1px solid #ffffff;border-right:1px solid #30281f;border-radius:2px 2px 0 0;"></div><div style="left:536px;top:209px;width:1px;height:19px;background:#8c8296;"></div><span style="left:483px;top:208px;font-size:12.5px;line-height:16px;height:16px;transform:scaleX(0.858);transform-origin:0 0;">Side View</span><div style="left:478px;top:209px;width:58px;height:16px;border:1px dotted #30281f;"></div><div class="box" style="left:487px;top:238px;width:305px;height:304px;"></div><div style="left:808px;top:238px;width:96px;height:304px;border:1px solid;border-color:#8c8296 #ffffff #ffffff #8c8296;"></div><div style="left:809px;top:239px;width:94px;height:302px;border:1px solid;border-color:#30281f #c8c8c8 #c8c8c8 #30281f;background:#ffffff;"></div><div class="btn" style="left:810px;top:240px;width:36px;height:21px;"></div><div style="left:846px;top:260px;width:56px;height:1px;background:#c8c8c8;"></div><span style="left:811.5px;top:241px;font-size:12.5px;line-height:16px;height:16px;transform:scaleX(0.835);transform-origin:0 0;">W1</span><span style="left:848.5px;top:241px;font-size:12.5px;line-height:16px;height:16px;transform:scaleX(0.855);transform-origin:0 0;">1.000</span><div class="btn" style="left:810px;top:261px;width:36px;height:21px;"></div><div style="left:846px;top:281px;width:56px;height:1px;background:#c8c8c8;"></div><span style="left:811.5px;top:262px;font-size:12.5px;line-height:16px;height:16px;transform:scaleX(0.835);transform-origin:0 0;">W2</span><span style="left:848.5px;top:262px;font-size:12.5px;line-height:16px;height:16px;transform:scaleX(0.855);transform-origin:0 0;">0.500</span><div class="btn" style="left:810px;top:282px;width:36px;height:21px;"></div><div style="left:846px;top:302px;width:56px;height:1px;background:#c8c8c8;"></div><span style="left:811.5px;top:283px;font-size:12.5px;line-height:16px;height:16px;transform:scaleX(0.835);transform-origin:0 0;">W3</span><span style="left:848.5px;top:283px;font-size:12.5px;line-height:16px;height:16px;transform:scaleX(0.855);transform-origin:0 0;">0.500</span><div class="btn" style="left:810px;top:303px;width:36px;height:21px;"></div><div style="left:846px;top:323px;width:56px;height:1px;background:#c8c8c8;"></div><span style="left:811.5px;top:304px;font-size:12.5px;line-height:16px;height:16px;transform:scaleX(0.835);transform-origin:0 0;">W4</span><span style="left:848.5px;top:304px;font-size:12.5px;line-height:16px;height:16px;transform:scaleX(0.855);transform-origin:0 0;">1.000</span><div class="btn" style="left:810px;top:324px;width:36px;height:21px;"></div><div style="left:846px;top:344px;width:56px;height:1px;background:#c8c8c8;"></div><span style="left:811.5px;top:325px;font-size:12.5px;line-height:16px;height:16px;transform:scaleX(0.835);transform-origin:0 0;">W5</span><span style="left:848.5px;top:325px;font-size:12.5px;line-height:16px;height:16px;transform:scaleX(0.855);transform-origin:0 0;">3.000</span><div class="btn" style="left:810px;top:345px;width:36px;height:21px;"></div><div style="left:846px;top:365px;width:56px;height:1px;background:#c8c8c8;"></div><span style="left:811.5px;top:346px;font-size:12.5px;line-height:16px;height:16px;transform:scaleX(0.835);transform-origin:0 0;">W6</span><span style="left:848.5px;top:346px;font-size:12.5px;line-height:16px;height:16px;transform:scaleX(0.855);transform-origin:0 0;">0.000</span><div class="btn" style="left:810px;top:366px;width:36px;height:21px;"></div><div style="left:846px;top:386px;width:56px;height:1px;background:#c8c8c8;"></div><span style="left:811.5px;top:367px;font-size:12.5px;line-height:16px;height:16px;transform:scaleX(0.835);transform-origin:0 0;">W7</span><span style="left:848.5px;top:367px;font-size:12.5px;line-height:16px;height:16px;transform:scaleX(0.855);transform-origin:0 0;">0.000</span><div class="btn" style="left:810px;top:387px;width:36px;height:21px;"></div><div style="left:846px;top:407px;width:56px;height:1px;background:#c8c8c8;"></div><span style="left:811.5px;top:388px;font-size:12.5px;line-height:16px;height:16px;transform:scaleX(0.835);transform-origin:0 0;">H4</span><span style="left:848.5px;top:388px;font-size:12.5px;line-height:16px;height:16px;transform:scaleX(0.855);transform-origin:0 0;">1.000</span><div class="btn" style="left:810px;top:408px;width:36px;height:21px;"></div><div style="left:846px;top:428px;width:56px;height:1px;background:#c8c8c8;"></div><span style="left:811.5px;top:409px;font-size:12.5px;line-height:16px;height:16px;transform:scaleX(0.835);transform-origin:0 0;">H5</span><span style="left:848.5px;top:409px;font-size:12.5px;line-height:16px;height:16px;transform:scaleX(0.855);transform-origin:0 0;">0.500</span><div style="left:902px;top:240px;width:1px;height:189px;background:#c8c8c8;"></div><div class="btn" style="left:487px;top:558px;width:73px;height:25px;"></div><span style="left:509.5px;top:562px;font-size:12.5px;line-height:16px;height:16px;transform:scaleX(0.864);transform-origin:0 0;"><u>A</u>pply</span><svg style="left:0;top:0" width="1024" height="766" shape-rendering="crispEdges" fill="none"><path d="M609.5 253V525" stroke="#8c8296" stroke-dasharray="9 3 2 3"/><path d="M579.5 268V420M609.5 268V298M639.5 268V300" stroke="#10107c" stroke-dasharray="3 3"/><path d="M548.5 421V453M579.5 421V453M639.5 421V453M670.5 421V453" stroke="#10107c" stroke-dasharray="3 3"/><path d="M517.5 483V511M731.5 483V511" stroke="#10107c" stroke-dasharray="3 3"/><path d="M671 420.5H778M732 452.5H755M732 482.5H778" stroke="#10107c" stroke-dasharray="3 3"/><path d="M579 284.5H586.0M602.0 284.5H610" stroke="#10107c"/><path d="M583 281L579.5 284.5L583 288M606 281L609.5 284.5L606 288" stroke="#10107c" shape-rendering="auto"/><path d="M609 284.5H616.0M632.0 284.5H640" stroke="#10107c"/><path d="M613 281L609.5 284.5L613 288M636 281L639.5 284.5L636 288" stroke="#10107c" shape-rendering="auto"/><path d="M548 436.5H555.5M571.5 436.5H580" stroke="#10107c"/><path d="M552 433L548.5 436.5L552 440M576 433L579.5 436.5L576 440" stroke="#10107c" shape-rendering="auto"/><path d="M579 436.5H601.0M617.0 436.5H640" stroke="#ee1800"/><path d="M583 433L579.5 436.5L583 440M636 433L639.5 436.5L636 440" stroke="#ee1800" shape-rendering="auto"/><path d="M639 436.5H646.5M662.5 436.5H671" stroke="#10107c"/><path d="M643 433L639.5 436.5L643 440M667 433L670.5 436.5L667 440" stroke="#10107c" shape-rendering="auto"/><path d="M517 497.5H555.0M571.0 497.5H610" stroke="#10107c"/><path d="M521 494L517.5 497.5L521 501M606 494L609.5 497.5L606 501" stroke="#10107c" shape-rendering="auto"/><path d="M609 497.5H662.0M678.0 497.5H732" stroke="#10107c"/><path d="M613 494L609.5 497.5L613 501M728 494L731.5 497.5L728 501" stroke="#10107c" shape-rendering="auto"/><path d="M761.5 420V444M761.5 457V483" stroke="#10107c"/><path d="M758 424L761.5 420.5L765 424M758 479L761.5 482.5L765 479" stroke="#10107c" shape-rendering="auto"/><path d="M746.5 452V460M746.5 472V483" stroke="#10107c"/><path d="M743 456L746.5 452.5L750 456M743 479L746.5 482.5L750 479" stroke="#10107c" shape-rendering="auto"/><path d="M610 299H639V421H671L731 453V482H517V453L548 421H580Z" stroke="#30281f" stroke-width="2" shape-rendering="auto" stroke-linejoin="miter"/></svg><span style="left:586.7px;top:276px;font-size:12.5px;line-height:16px;height:16px;transform:scaleX(0.835);transform-origin:0 0;color:#10107c;">W3</span><span style="left:616.7px;top:276px;font-size:12.5px;line-height:16px;height:16px;transform:scaleX(0.835);transform-origin:0 0;color:#10107c;">W2</span><span style="left:556.2px;top:428px;font-size:12.5px;line-height:16px;height:16px;transform:scaleX(0.835);transform-origin:0 0;color:#10107c;">W6</span><span style="left:601.7px;top:428px;font-size:12.5px;line-height:16px;height:16px;transform:scaleX(0.835);transform-origin:0 0;color:#ee1800;">W1</span><span style="left:647.2px;top:428px;font-size:12.5px;line-height:16px;height:16px;transform:scaleX(0.835);transform-origin:0 0;color:#10107c;">W7</span><span style="left:555.7px;top:489px;font-size:12.5px;line-height:16px;height:16px;transform:scaleX(0.835);transform-origin:0 0;color:#10107c;">W4</span><span style="left:662.7px;top:489px;font-size:12.5px;line-height:16px;height:16px;transform:scaleX(0.835);transform-origin:0 0;color:#10107c;">W5</span><span style="left:755.3px;top:443.5px;font-size:12.5px;line-height:16px;height:16px;transform:scaleX(0.835);transform-origin:0 0;color:#10107c;">H4</span><span style="left:739.8px;top:458.5px;font-size:12.5px;line-height:16px;height:16px;transform:scaleX(0.835);transform-origin:0 0;color:#10107c;">H5</span>
</body></html>
